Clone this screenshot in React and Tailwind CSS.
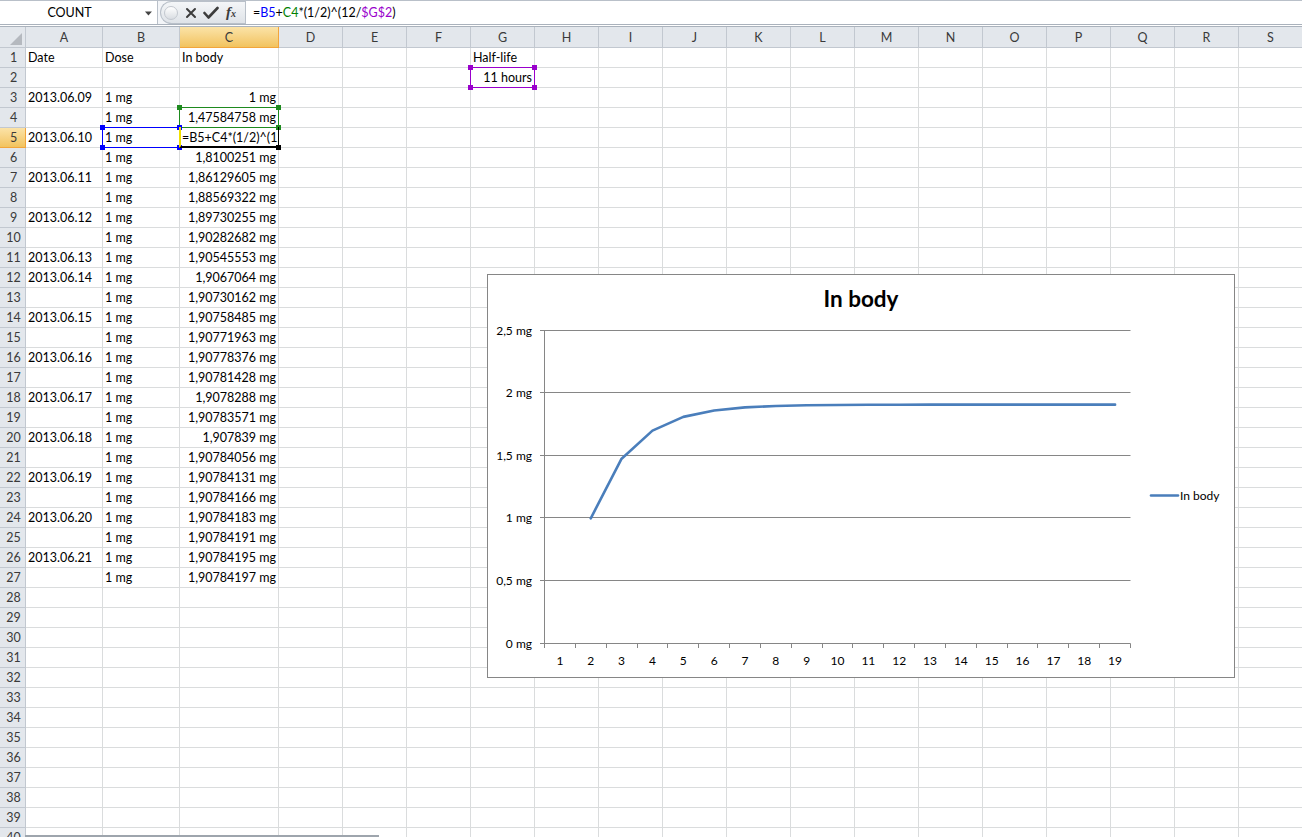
import React from "react";

const COLS = [
  { l: "A", w: "w-[77px]" },
  { l: "B", w: "w-[77px]" },
  { l: "C", w: "w-[99px]" },
  ...["D", "E", "F", "G", "H", "I", "J", "K", "L", "M", "N", "O", "P", "Q", "R", "S"].map((l) => ({ l, w: "w-[64px]" })),
];

const dates = {
  3: "2013.06.09",
  5: "2013.06.10",
  7: "2013.06.11",
  9: "2013.06.12",
  11: "2013.06.13",
  12: "2013.06.14",
  14: "2013.06.15",
  16: "2013.06.16",
  18: "2013.06.17",
  20: "2013.06.18",
  22: "2013.06.19",
  24: "2013.06.20",
  26: "2013.06.21",
};

const body = {
  3: "1 mg",
  4: "1,47584758 mg",
  6: "1,8100251 mg",
  7: "1,86129605 mg",
  8: "1,88569322 mg",
  9: "1,89730255 mg",
  10: "1,90282682 mg",
  11: "1,90545553 mg",
  12: "1,9067064 mg",
  13: "1,90730162 mg",
  14: "1,90758485 mg",
  15: "1,90771963 mg",
  16: "1,90778376 mg",
  17: "1,90781428 mg",
  18: "1,9078288 mg",
  19: "1,90783571 mg",
  20: "1,907839 mg",
  21: "1,90784056 mg",
  22: "1,90784131 mg",
  23: "1,90784166 mg",
  24: "1,90784183 mg",
  25: "1,90784191 mg",
  26: "1,90784195 mg",
  27: "1,90784197 mg",
};

function cellContent(r, c) {
  if (r === 1) {
    if (c === "A") return { t: "Date" };
    if (c === "B") return { t: "Dose" };
    if (c === "C") return { t: "In body" };
    if (c === "G") return { t: "Half-life" };
  }
  if (r === 2 && c === "G") return { t: "11 hours", right: true };
  if (c === "A" && dates[r]) return { t: dates[r] };
  if (c === "B" && r >= 3 && r <= 27) return { t: "1 mg" };
  if (c === "C" && r === 5) return { t: "=B5+C4*(1/2)^(12/$G$2)" };
  if (c === "C" && body[r]) return { t: body[r], right: true };
  return null;
}

function FormulaBar() {
  return (
    <div className="flex h-[24px] bg-[#f3f5f8] border-t border-[#b9c0c9]">
      <div className="flex w-[158px] shrink-0 items-center bg-white border-r border-[#b9c0c9]">
        <div className="w-[140px] text-center text-[12.5px] leading-[23px] text-black">COUNT</div>
        <svg width="18" height="23" viewBox="0 0 18 23">
          <path d="M6 10.5 L13 10.5 L9.5 14.5 Z" fill="#444" />
        </svg>
      </div>
      <div className="ml-[2px] flex h-[23px] w-[85px] shrink-0 items-center rounded-l-full border border-r-0 border-[#b9c0c9] bg-gradient-to-b from-[#f4f6f8] to-[#dfe3e8]">
        <div className="ml-[3px] h-[14px] w-[14px] rounded-full border border-[#c3c8cf] bg-gradient-to-b from-[#ffffff] to-[#d9dde2]" />
        <svg className="ml-[7px]" width="12" height="12" viewBox="0 0 12 12">
          <path d="M2 2 L10 10 M10 2 L2 10" stroke="#3c3c3c" strokeWidth="2" strokeLinecap="round" />
        </svg>
        <svg className="ml-[6px]" width="16" height="14" viewBox="0 0 16 14">
          <path d="M1.5 7 L5.5 11.5 L14.5 2" stroke="#3c3c3c" strokeWidth="2.6" fill="none" strokeLinecap="round" strokeLinejoin="round" />
        </svg>
        <span className="ml-[7px] font-['Liberation_Serif',serif] text-[15px] font-bold italic leading-none text-[#3c3c3c]">
          f<span className="text-[10px]">x</span>
        </span>
      </div>
      <div className="flex flex-1 items-center bg-white border-l border-[#b9c0c9] pl-[7px] text-[12.5px] leading-[23px] text-black whitespace-nowrap">
        <span>=</span>
        <span className="text-[#0000ff]">B5</span>
        <span>+</span>
        <span className="text-[#008000]">C4</span>
        <span>*(1/2)^(12/</span>
        <span className="text-[#9900cc]">$G$2</span>
        <span>)</span>
      </div>
    </div>
  );
}

function HeaderRow() {
  return (
    <div className="flex h-[21px]">
      <div className="relative w-[26px] shrink-0 border-r border-b border-[#c2c8d0] bg-[#e3e7ec]">
        <svg className="absolute left-0 top-0" width="26" height="21" viewBox="0 0 26 21">
          <path d="M10 18 L22 18 L22 6 Z" fill="#b5b9bf" />
        </svg>
      </div>
      {COLS.map((c) =>
        c.l === "C" ? (
          <div
            key={c.l}
            className={`${c.w} shrink-0 border-r border-b border-[#f2a53b] bg-gradient-to-b from-[#fbe3a7] to-[#f2c35d] pt-[1px] text-center text-[12.5px] leading-[19px] text-[#3a3a3a]`}
          >
            {c.l}
          </div>
        ) : (
          <div
            key={c.l}
            className={`${c.w} shrink-0 border-r border-b border-[#c2c8d0] bg-[#e3e7ec] pt-[1px] text-center text-[12.5px] leading-[19px] text-[#3a3a3a]`}
          >
            {c.l}
          </div>
        )
      )}
    </div>
  );
}

function Row({ r }) {
  return (
    <div className="flex h-[20px]">
      {r === 5 ? (
        <div className="w-[26px] shrink-0 border-r border-b border-[#f2a53b] bg-gradient-to-b from-[#fbe3a7] to-[#f2c35d] pl-[2px] text-center text-[12.5px] leading-[19px] text-[#3a3a3a]">
          {r}
        </div>
      ) : (
        <div className="w-[26px] shrink-0 border-r border-b border-[#c2c8d0] bg-[#e3e7ec] pl-[2px] text-center text-[12.5px] leading-[19px] text-[#3a3a3a]">
          {r}
        </div>
      )}
      {COLS.map((c) => {
        const v = cellContent(r, c.l);
        return (
          <div
            key={c.l}
            className={`${c.w} shrink-0 overflow-hidden whitespace-nowrap border-r border-b border-[#dadcdd] px-[2px] text-[12.5px] leading-[19px] text-black ${
              v && v.right ? "text-right" : "text-left"
            }`}
          >
            {v ? v.t : ""}
          </div>
        );
      })}
    </div>
  );
}

function Handles({ color }) {
  return (
    <>
      <div className={`absolute left-[-3px] top-[-3px] h-[5px] w-[5px] ${color}`} />
      <div className={`absolute right-[-3px] top-[-3px] h-[5px] w-[5px] ${color}`} />
      <div className={`absolute left-[-3px] bottom-[-3px] h-[5px] w-[5px] ${color}`} />
      <div className={`absolute right-[-3px] bottom-[-3px] h-[5px] w-[5px] ${color}`} />
    </>
  );
}

const vals = [
  null, 1, 1.47584758, 1.70, 1.8100251, 1.86129605, 1.88569322, 1.89730255, 1.90282682, 1.90545553,
  1.9067064, 1.90730162, 1.90758485, 1.90771963, 1.90778376, 1.90781428, 1.9078288, 1.90783571, 1.907839,
];

function Chart() {
  const catW = 586 / 19;
  const xC = (i) => 57.5 + (i - 0.5) * catW;
  const yV = (v) => 369.5 - v * 125.2;
  const grid = [
    { y: 369.5, t: "0 mg" },
    { y: 306.5, t: "0,5 mg" },
    { y: 243.5, t: "1 mg" },
    { y: 181.5, t: "1,5 mg" },
    { y: 118.5, t: "2 mg" },
    { y: 56.5, t: "2,5 mg" },
  ];
  const pts = vals
    .map((v, i) => (v == null ? null : `${xC(i + 1).toFixed(2)},${yV(v).toFixed(2)}`))
    .filter(Boolean)
    .join(" ");
  return (
    <div className="absolute left-[487px] top-[274px] h-[404px] w-[748px] border border-[#868686] bg-white">
      <svg className="absolute left-[-1px] top-[-1px]" width="748" height="404" viewBox="0 0 748 404">
        <text x="374" y="33" textAnchor="middle" fontSize="22.5" fontWeight="700" fill="#000" fontFamily="Lato, sans-serif">
          In body
        </text>
        {grid.map((g) => (
          <g key={g.t}>
            <line x1="53" y1={g.y} x2="643.5" y2={g.y} stroke="#868686" strokeWidth="1" />
            <text x="45" y={g.y + 4} textAnchor="end" fontSize="12" fill="#000" fontFamily="Lato, sans-serif">
              {g.t}
            </text>
          </g>
        ))}
        <line x1="57.5" y1="56.5" x2="57.5" y2="369.5" stroke="#868686" strokeWidth="1" />
        {Array.from({ length: 20 }, (_, i) => {
          const x = Math.round(57 + i * catW) + 0.5;
          return <line key={i} x1={x} y1="369.5" x2={x} y2="374" stroke="#868686" strokeWidth="1" />;
        })}
        {Array.from({ length: 19 }, (_, i) => (
          <text key={i} x={xC(i + 1)} y="391" textAnchor="middle" fontSize="12" fill="#000" fontFamily="Lato, sans-serif">
            {i + 1}
          </text>
        ))}
        <polyline points={pts} fill="none" stroke="#4a7ebb" strokeWidth="2.6" strokeLinejoin="round" strokeLinecap="round" />
        <line x1="664" y1="221.5" x2="691" y2="221.5" stroke="#4a7ebb" strokeWidth="2.6" strokeLinecap="round" />
        <text x="693" y="226" fontSize="12" fill="#000" fontFamily="Lato, sans-serif">
          In body
        </text>
      </svg>
    </div>
  );
}

export default function App() {
  const rows = Array.from({ length: 40 }, (_, i) => i + 1);
  return (
    <div className="relative h-[837px] w-[1302px] overflow-hidden bg-white font-['Lato',sans-serif]">
      <FormulaBar />
      <div className="h-[3px] border-y border-[#aab2bc] bg-white" />
      <HeaderRow />
      {rows.map((r) => (
        <Row key={r} r={r} />
      ))}

      {/* G2 range (purple) */}
      <div className="absolute left-[470px] top-[67px] h-[21px] w-[65px] border border-[#9900cc]">
        <Handles color="bg-[#9900cc]" />
      </div>
      {/* C4 range (green) */}
      <div className="absolute left-[179px] top-[107px] h-[21px] w-[100px] border border-[#1e8a1e]">
        <Handles color="bg-[#1e8a1e]" />
      </div>
      {/* B5 range (blue) */}
      <div className="absolute left-[102px] top-[127px] h-[21px] w-[78px] border border-[#0000ff]">
        <Handles color="bg-[#0000ff]" />
      </div>
      {/* Active cell C5 */}
      <div className="absolute left-[179px] top-[127px] h-[21px] w-[100px] border-l-2 border-r border-b-2 border-l-[#f0e000] border-r-[#000] border-b-[#000]">
        <div className="absolute right-[-3px] bottom-[-4px] h-[5px] w-[5px] bg-black" />
      </div>

      <Chart />

      <div className="absolute left-[25px] top-[835px] h-[2px] w-[354px] bg-[#9ea5ad]" />
    </div>
  );
}
